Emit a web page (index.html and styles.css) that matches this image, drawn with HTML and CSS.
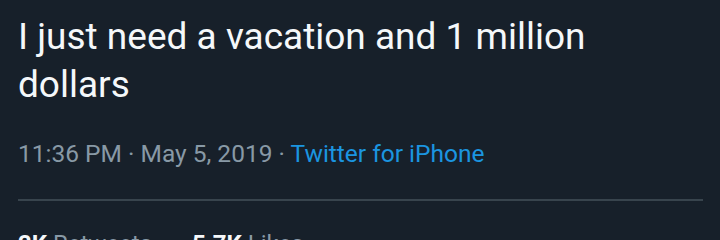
FILE: index.html
```html
<!DOCTYPE html>
<html lang="en">
<head>
  <meta charset="UTF-8" />
  <meta name="viewport" content="width=device-width, initial-scale=1.0" />
  <title>Tweet</title>
  <link rel="stylesheet" href="styles.css">
</head>
<body>
  <main class="tweet">
    <p class="tweet-text">I just need a vacation and 1 million dollars</p>
    <div class="meta">
      <span>11:36 PM</span> · <span>May 5, 2019</span> · <a href="#" class="source">Twitter for iPhone</a>
    </div>
    <div class="stats">
      <span><b>2K</b> Retweets</span>
      <span><b>5.7K</b> Likes</span>
    </div>
  </main>
</body>
</html>
```

FILE: styles.css
```css
* {
  margin: 0;
  padding: 0;
  box-sizing: border-box;
}
body {
  background-color: #17202a;
  font-family: Roboto, "Noto Sans", sans-serif;
  overflow: hidden;
}
.tweet {
  padding: 13px 17px 0 18px;
}
.tweet-text {
  color: #f5f8fa;
  font-size: 37px;
  line-height: 48px;
}
.meta {
  margin-top: 30px;
  color: #8899a6;
  font-size: 24.5px;
  line-height: 30px;
  padding-bottom: 30px;
  border-bottom: 2px solid #38444d;
}
.source {
  color: #1b95e0;
  text-decoration: none;
}
.stats {
  display: flex;
  gap: 40px;
  padding-top: 28px;
  font-size: 24px;
  line-height: 30px;
  color: #8899a6;
}
.stats b {
  color: #f5f8fa;
}
```
